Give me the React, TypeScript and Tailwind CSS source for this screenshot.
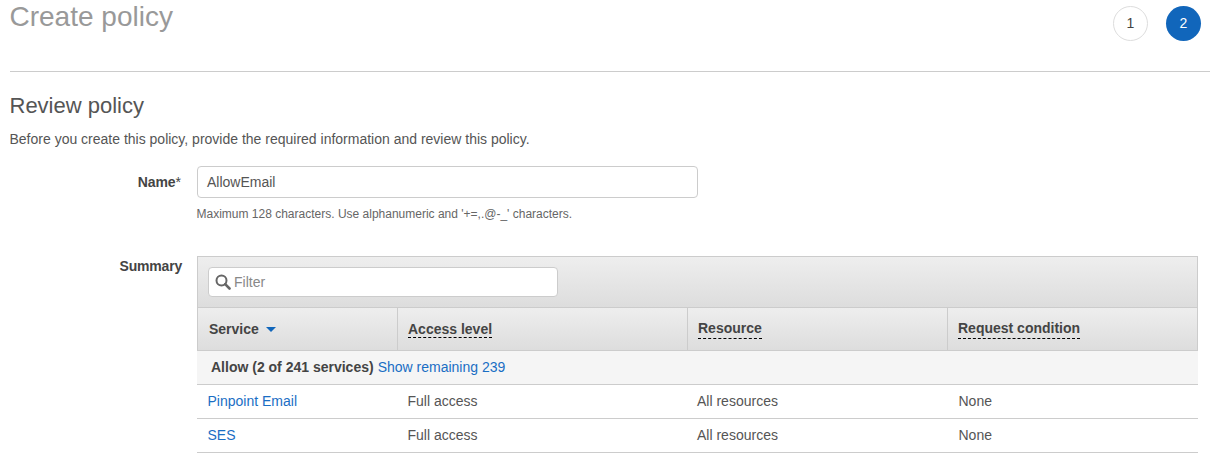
import React from "react";

function Th({ w, label, dashed, sort, gap }: { w: string; label: string; dashed?: boolean; sort?: boolean; gap?: string }) {
  return (
    <div className={`${w} flex h-full items-center border-r border-[#cccccc] pr-[10px] last:border-r-0 text-[14px] font-bold text-[#444444] ${sort ? "pl-[11px]" : "pl-[10px]"}`}>
      {dashed ? (
        <span className={`border-b border-dashed border-black leading-[16px] ${gap}`}>{label}</span>
      ) : (
        <span className="leading-[16px]">{label}</span>
      )}
      {sort && <span className="ml-[7px] mt-[1px] h-0 w-0 border-x-[5px] border-t-[5px] border-x-transparent border-t-[#1166bb]" />}
    </div>
  );
}

function Row({ name }: { name: string }) {
  return (
    <div className="flex h-[34px] items-center border-b border-[#cccccc] text-[14px] text-[#555555]">
      <a className="w-[200px] pl-[10.5px] text-[#1a6ec4]">{name}</a>
      <div className="w-[290px] pl-[10.5px]">Full access</div>
      <div className="w-[261px] pl-[10px]">All resources</div>
      <div className="pl-[10.5px]">None</div>
    </div>
  );
}

export default function App() {
  return (
    <div className="h-[468px] w-[1222px] overflow-hidden bg-white pl-[10px] pr-[12px] font-['Liberation_Sans',Arial,sans-serif] text-[#444444]">
      <div className="flex h-[72px] items-start justify-between border-b border-[#cccccc]">
        <h1 className="-ml-[0.5px] -mt-[1px] text-[28px] leading-[36px] text-[#999999]">Create policy</h1>
        <div className="mr-[9px] mt-[6px] flex gap-[18px] text-[14px]">
          <div className="flex h-[35px] w-[35px] items-center justify-center rounded-full border border-[#dddddd] text-[#444444]">1</div>
          <div className="flex h-[35px] w-[35px] items-center justify-center rounded-full bg-[#1166bb] text-white">2</div>
        </div>
      </div>

      <h2 className="-ml-[0.5px] mt-[21px] text-[22px] leading-[26px] text-[#555555]">Review policy</h2>
      <p className="-ml-[0.5px] mt-[12px] text-[14px] leading-[17px] text-[#555555]">
        Before you create this policy, provide the required information and review this policy.
      </p>

      <div className="mt-[18px] flex">
        <div className="w-[171px] pt-[8px] text-right text-[14px] leading-[17px]">
          <b className="tracking-[-0.1px]">Name</b>*
        </div>
        <div className="ml-[16px]">
          <div className="flex h-[32px] w-[501px] items-center rounded-[4px] border border-[#cccccc] pl-[9px] text-[14px] text-[#555555]">AllowEmail</div>
          <p className="-ml-[0.5px] mt-[9px] text-[12px] leading-[14px] text-[#666666]">
            Maximum 128 characters. Use alphanumeric and '+=,.@-_' characters.
          </p>
        </div>
      </div>

      <div className="mt-[35px] flex">
        <div className="w-[172px] pt-[2px] text-right text-[14px] font-bold leading-[17px] tracking-[-0.2px]">Summary</div>
        <div className="ml-[15px] w-[1001px]">
          <div className="flex h-[51px] items-center border border-b-0 border-[#cccccc] bg-gradient-to-b from-[#eeeeee] to-[#dddddd] pl-[10px]">
            <div className="flex h-[30px] w-[350px] items-center rounded-[4px] border border-[#cccccc] bg-white pl-[6px] text-[14px] text-[#888888]">
              <svg width="16" height="16" viewBox="0 0 16 16" fill="none" stroke="#666666" strokeWidth="2">
                <circle cx="6.5" cy="6.5" r="5" />
                <path d="M10.2 10.2 L14.5 14.5" strokeWidth="2.6" strokeLinecap="round" />
              </svg>
              <span className="ml-[3px]">Filter</span>
            </div>
          </div>
          <div className="flex h-[44px] items-center border border-[#cccccc] bg-gradient-to-b from-[#eeeeee] to-[#dddddd]">
            <Th w="w-[200px]" label="Service" sort />
            <Th w="w-[290px]" label="Access level" dashed />
            <Th w="w-[260px]" label="Resource" dashed gap="pb-[2px]" />
            <Th w="flex-1" label="Request condition" dashed gap="pb-[2px]" />
          </div>
          <div className="flex h-[34px] items-center border-b border-[#cccccc] bg-[#f5f5f5] pl-[14px] text-[14px]">
            <b>Allow (2 of 241 services)</b>
            <a className="ml-[4px] text-[#1a6ec4]">Show remaining 239</a>
          </div>
          <Row name="Pinpoint Email" />
          <Row name="SES" />
        </div>
      </div>
    </div>
  );
}
